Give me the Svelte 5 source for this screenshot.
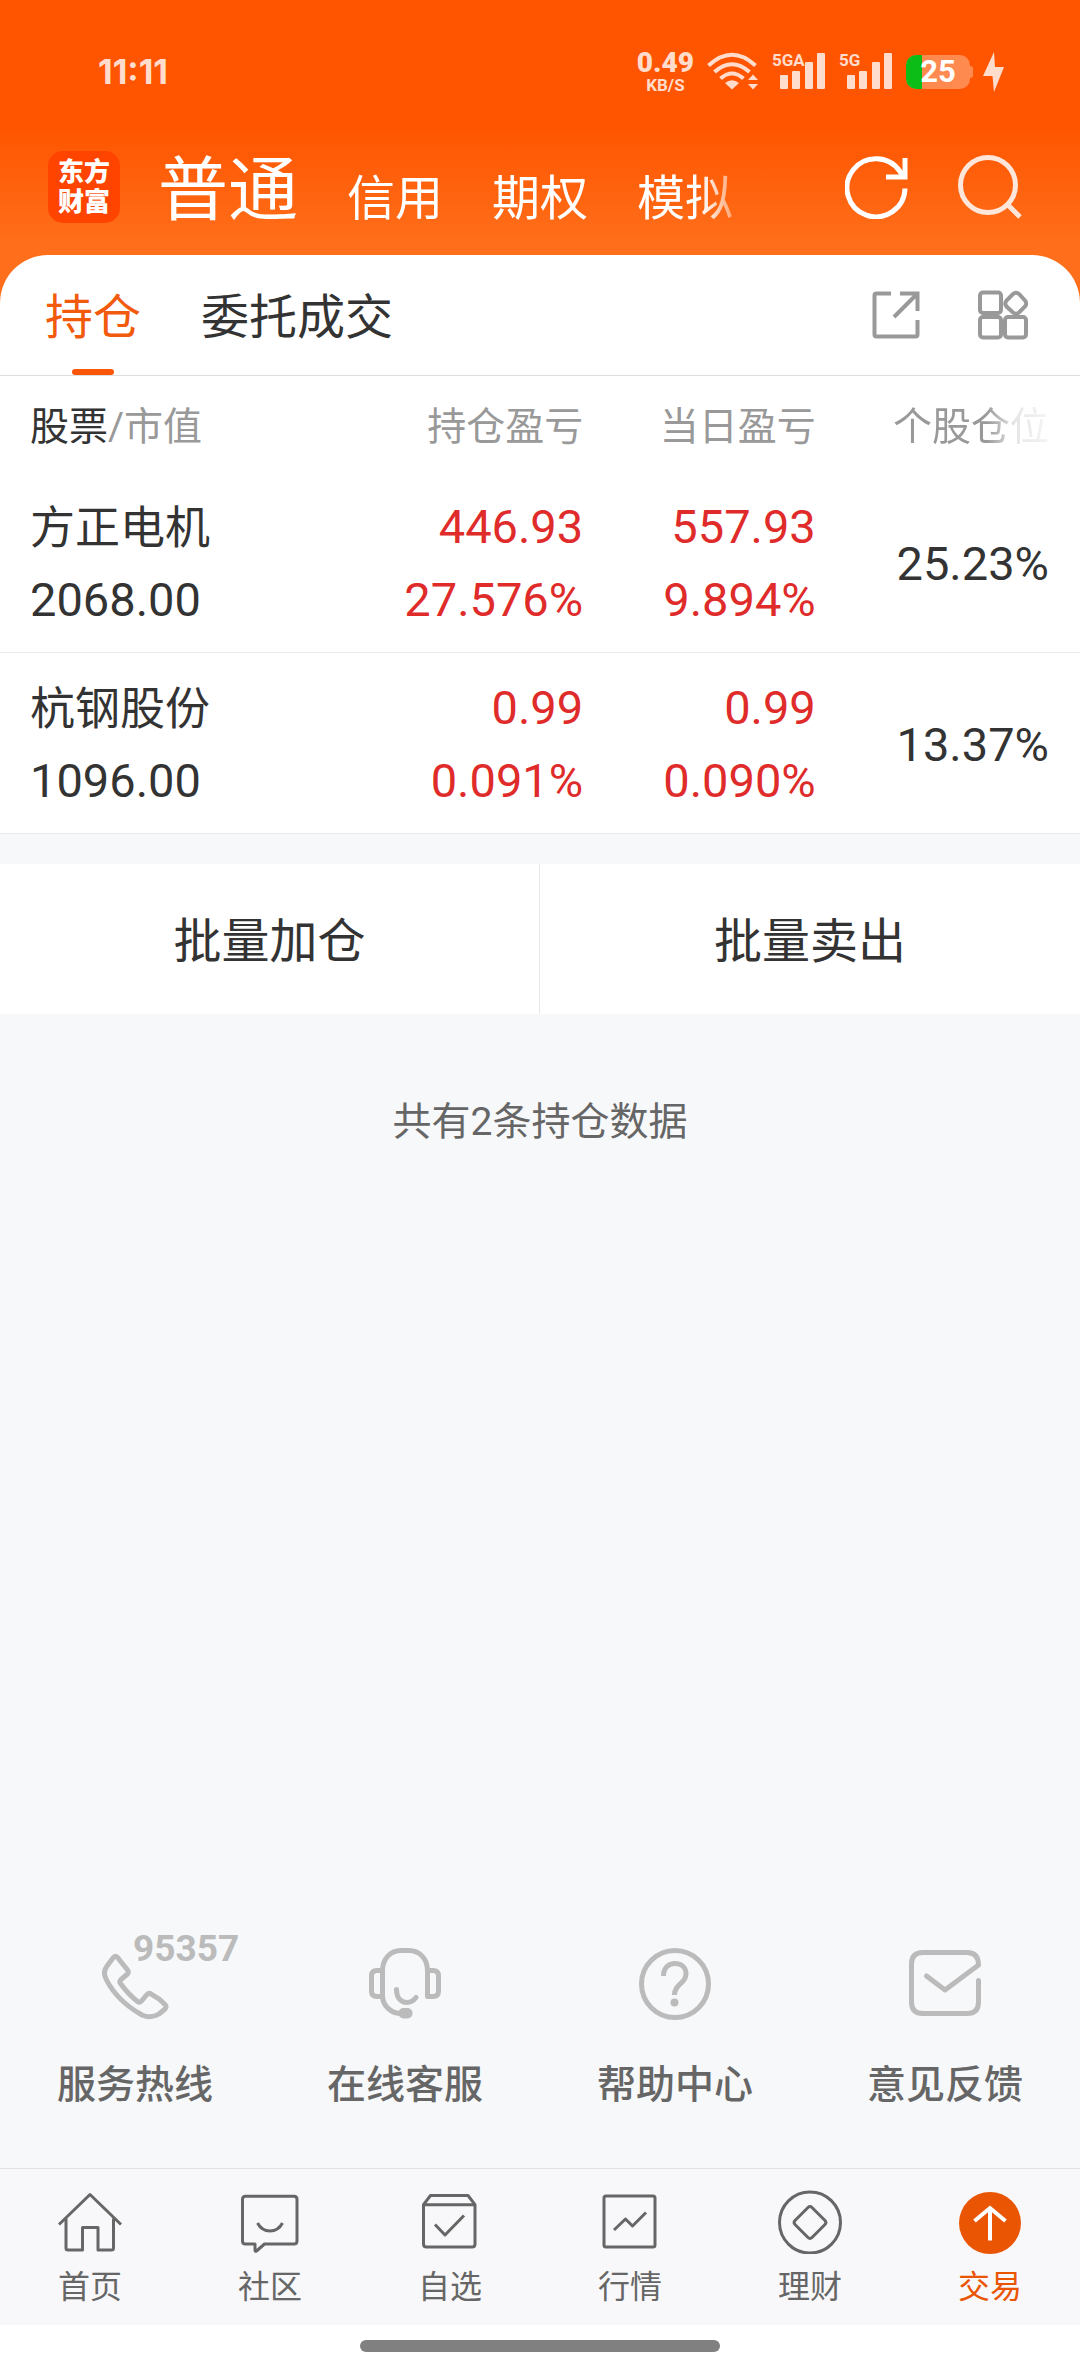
<script>
  const accounts = ['普通', '信用', '期权', '模拟'];
  let account = $state('普通');

  const views = ['持仓', '委托成交'];
  let view = $state('持仓');

  const holdings = [
    { name: '方正电机', value: '2068.00', profit: '446.93', profitRate: '27.576%', day: '557.93', dayRate: '9.894%', share: '25.23%' },
    { name: '杭钢股份', value: '1096.00', profit: '0.99', profitRate: '0.091%', day: '0.99', dayRate: '0.090%', share: '13.37%' }
  ];

  const services = [
    { id: 'phone', label: '服务热线', badge: '95357' },
    { id: 'headset', label: '在线客服' },
    { id: 'help', label: '帮助中心' },
    { id: 'mail', label: '意见反馈' }
  ];

  const navItems = [
    { id: 'home', label: '首页' },
    { id: 'community', label: '社区' },
    { id: 'watchlist', label: '自选' },
    { id: 'market', label: '行情' },
    { id: 'wealth', label: '理财' },
    { id: 'trade', label: '交易' }
  ];
  const currentNav = 'trade';
  const battery = 25;
</script>

{#snippet signal(label)}
  <svg class="signal" width="54" height="46" viewBox="0 -3 54 46" aria-hidden="true">
    <text x="0" y="14">{label}</text>
    <rect x="8" y="23" width="8" height="14" rx="1" />
    <rect x="20" y="19" width="8" height="18" rx="1" />
    <rect x="33" y="10" width="8" height="27" rx="1" />
    <rect x="45" y="1" width="8" height="36" rx="1" />
  </svg>
{/snippet}

{#snippet serviceIcon(id)}
  <svg width="72" height="72" viewBox="0 0 72 72" aria-hidden="true">
    {#if id === 'phone'}
      <path d="M14 10Q16.500 6.500 19 10L28.500 22Q30 24 28.500 26L22 31.500Q20 33.500 21.500 35.500Q29 46 38.500 53.500Q40.500 55 42.500 53L47.500 47Q49.500 44.500 52 46Q60 50 66 56.500Q68 58.500 66 61L60 66Q52 71 43 67Q18 53 7 31Q3.500 24 8 18Z" />
    {:else if id === 'headset'}
      <path d="M13.500 47V23C13.500 10 22 2.500 32 2.500H40C50 2.500 58.500 10 58.500 23V48.500H64Q69.500 48.500 69.500 43V28Q69.500 22.500 64 22.500H58.500" />
      <path d="M13.500 22.500H8Q2.500 22.500 2.500 28V43Q2.500 48.500 8 48.500H13.500C14 58 22 65 31 65.500" />
      <path d="M27.500 41.500C27.500 50 32 54.500 38 54.500Q43 54.500 47 49.500" />
      <rect class="solid" x="29.500" y="60" width="14" height="10.500" rx="5" />
    {:else if id === 'help'}
      <circle cx="36" cy="36" r="33.500" />
      <path class="butt" d="M24.500 28C24.500 19.500 30 15.500 36 15.500C43 15.500 47 20 47 26C47 36 35.500 35.500 35.500 47" />
      <circle class="solid" cx="35.500" cy="54.500" r="4" />
    {:else}
      <path d="M69.500 32.500V54Q69.500 65.500 58 65.500H14Q2.500 65.500 2.500 54V16Q2.500 4.500 14 4.500H58Q69.500 4.500 69.500 17L36 42L17.500 28" />
    {/if}
  </svg>
{/snippet}

{#snippet navIcon(id)}
  <svg width="64" height="64" viewBox="0 0 64 64" aria-hidden="true">
    {#if id === 'home'}
      <path d="M1 34.500L32 4.500L63 34.500" />
      <path d="M8 28.500V58Q8 60 10 60H24.500V37.500H40V60H53.500Q55.500 60 55.500 58V28.500" />
    {:else if id === 'community'}
      <path d="M7.500 6.300H56Q59 6.300 59 9.300V51Q59 54 56 54H26.500L18.500 61Q17 62 17 60V54H7.500Q4.500 54 4.500 51V9.300Q4.500 6.300 7.500 6.300Z" />
      <path d="M19.500 33C25 43.500 39 43.500 44.500 33" />
    {:else if id === 'watchlist'}
      <path d="M5.500 14.700L12.500 5.500H50L57 14.700V54Q57 57 54 57H8.500Q5.500 57 5.500 54ZM5.500 14.700H57" />
      <path d="M17 34.500L27 45L46 25.500" />
    {:else if id === 'market'}
      <rect x="6" y="6" width="51" height="51" rx="2" />
      <path d="M16 40L27.500 29L34.500 36L48 22.500" />
    {:else if id === 'wealth'}
      <circle cx="32" cy="32.500" r="30.500" />
      <path d="M30 17.500Q32 15.500 34 17.500L47 30.500Q49 32.500 47 34.500L34 47.500Q32 49.500 30 47.500L17 34.500Q15 32.500 17 30.500Z" />
    {:else}
      <circle class="disc" cx="32" cy="33" r="31" />
      <path class="arrow" d="M32 50.500V18M16.500 31L32 18L47.500 31" />
    {/if}
  </svg>
{/snippet}

<div class="page">
  <header class="top">
    <div class="status">
      <time>11:11</time>
      <div class="indicators">
        <div class="speed"><b>0.49</b><small>KB/S</small></div>
        <svg class="wifi" width="52" height="40" viewBox="0 0 52 40" aria-hidden="true">
          <path d="M1.500 13.500Q25 -8 48.500 13.500M7.500 20Q25 4.500 42.500 20M13.500 26.500Q25 16.500 36.500 26.500" />
          <path class="solid" d="M18 31Q25 25.500 32 31L25 37.500Z" />
          <path class="solid" d="M41 28L46 22.500L51 28ZM41 32L46 37.500L51 32Z" />
        </svg>
        {@render signal('5GA')}
        {@render signal('5G')}
        <div class="battery">
          <div class="charge" style:width="{battery}%"></div>
          <span>{battery}</span>
        </div>
        <svg class="bolt" width="22" height="40" viewBox="0 0 22 40" aria-hidden="true">
          <path d="M11 0L0 24H9.500L11 40L21 15H12Z" />
        </svg>
      </div>
    </div>
    <div class="masthead">
      <div class="logo"><span>东方</span><span>财富</span></div>
      <nav class="accounts" aria-label="账户">
        {#each accounts as item}
          <button class:current={account === item} onclick={() => (account = item)}>{item}</button>
        {/each}
      </nav>
      <div class="actions">
        <button aria-label="刷新">
          <svg width="64" height="64" viewBox="0 0 64 64" aria-hidden="true">
            <path d="M60 33.500A29 29 0 1 1 55 16.500L59 22" />
            <path d="M41 22H60V3" />
          </svg>
        </button>
        <button aria-label="搜索" class="search">
          <svg width="64" height="64" viewBox="0 0 64 64" aria-hidden="true">
            <circle cx="30" cy="30" r="27.500" />
            <path d="M49 49L62 62" />
          </svg>
        </button>
      </div>
    </div>
  </header>

  <main>
    <section class="card">
      <div class="tabs">
        <div class="tablist" role="tablist">
          {#each views as item}
            <button role="tab" aria-selected={view === item} onclick={() => (view = item)}>{item}</button>
          {/each}
        </div>
        <div class="tools">
          <button aria-label="分享">
            <svg width="48" height="48" viewBox="0 0 48 48" aria-hidden="true">
              <path d="M19 2.500H4.500Q2.500 2.500 2.500 4.500V43.500Q2.500 45.500 4.500 45.500H43.500Q45.500 45.500 45.500 43.500V29M28 2.500H45.500V20M45 3L22 26" />
            </svg>
          </button>
          <button aria-label="更多功能">
            <svg width="50" height="50" viewBox="0 0 50 50" aria-hidden="true">
              <rect x="2" y="2.500" width="21" height="20.500" rx="3" />
              <rect x="2" y="27" width="21" height="20.500" rx="3" />
              <rect x="27" y="27" width="21" height="20.500" rx="3" />
              <path d="M35 4Q38 1.500 41 4L47 10.500Q49.500 13.500 47 16.500L41 22.500Q38 25 35 22.500L28.500 16.500Q26 13.500 28.500 10.500Z" />
            </svg>
          </button>
        </div>
      </div>

      <table>
        <colgroup><col class="c-name" /><col class="c-profit" /><col class="c-day" /><col /></colgroup>
        <thead>
          <tr>
            <th scope="col"><strong>股票</strong>/市值</th>
            <th scope="col">持仓盈亏</th>
            <th scope="col">当日盈亏</th>
            <th scope="col"><span class="faded">个股仓位</span></th>
          </tr>
        </thead>
        <tbody>
          {#each holdings as h}
            <tr>
              <td><div class="name">{h.name}</div><div>{h.value}</div></td>
              <td class="up"><div>{h.profit}</div><div>{h.profitRate}</div></td>
              <td class="up"><div>{h.day}</div><div>{h.dayRate}</div></td>
              <td>{h.share}</td>
            </tr>
          {/each}
        </tbody>
      </table>
    </section>

    <div class="batch">
      <button>批量加仓</button>
      <button>批量卖出</button>
    </div>

    <p class="summary">共有{holdings.length}条持仓数据</p>
  </main>

  <section class="services" aria-label="服务">
    {#each services as s}
      <a href="#{s.id}">
        <span class="icon">
          {@render serviceIcon(s.id)}
          {#if s.badge}<b>{s.badge}</b>{/if}
        </span>
        {s.label}
      </a>
    {/each}
  </section>

  <nav class="bottom" aria-label="主导航">
    {#each navItems as n}
      <a href="#{n.id}" class:active={n.id === currentNav} aria-current={n.id === currentNav ? 'page' : undefined}>
        {@render navIcon(n.id)}
        <span>{n.label}</span>
      </a>
    {/each}
  </nav>
  <div class="gesture"><div></div></div>
</div>

<style>
  :global(body) {
    margin: 0;
    background: #fff;
  }

  .page {
    display: flex;
    flex-direction: column;
    min-height: 100vh;
    background: #f7f8fa;
    color: #333;
    font-family: Roboto, 'Noto Sans CJK SC', sans-serif;
  }

  button {
    padding: 0;
    border: 0;
    background: none;
    color: inherit;
    font: inherit;
    white-space: nowrap;
    cursor: pointer;
  }

  a {
    color: inherit;
    text-decoration: none;
  }

  svg {
    display: block;
    fill: none;
  }

  /* Header */
  .top {
    padding-bottom: 61px;
    background: linear-gradient(#ff5500 42%, #ff6e1a 80%);
    color: #fff;
  }

  .status {
    display: flex;
    align-items: center;
    justify-content: space-between;
    height: 48px;
    padding: 48px 75px 0 98px;
    color: #ffdccb;
  }

  .status time {
    font: 700 34px/48px Inter, sans-serif;
  }

  .indicators {
    display: flex;
    align-items: center;
    gap: 13px;
  }

  .speed {
    display: flex;
    flex-direction: column;
    align-items: center;
    font-weight: 700;
  }

  .speed b {
    font-size: 28px;
    line-height: 26px;
  }

  .speed small {
    font-size: 17px;
    line-height: 18px;
  }

  .wifi {
    stroke: #ffdccb;
    stroke-width: 4px;
  }

  .wifi .solid {
    fill: #ffdccb;
    stroke: none;
  }

  .signal {
    overflow: visible;
    fill: #ffdccb;
    font-size: 17px;
    font-weight: 700;
  }

  .battery {
    position: relative;
    width: 64px;
    border-radius: 10px;
    background: #ff8a50;
    color: #fff;
    font-size: 31px;
    font-weight: 700;
    line-height: 34px;
    text-align: center;
  }

  .battery::after {
    content: '';
    position: absolute;
    top: 11px;
    left: 100%;
    width: 3px;
    height: 12px;
    border-radius: 0 3px 3px 0;
    background: #ff8a50;
  }

  .charge {
    position: absolute;
    inset: 0 auto 0 0;
    border-radius: 10px 0 0 10px;
    background: #0cbd17;
  }

  .battery span {
    position: relative;
  }

  .bolt {
    fill: #ffdccb;
  }

  .masthead {
    display: flex;
    align-items: center;
    height: 110px;
    padding: 36px 58px 0 48px;
  }

  .logo {
    display: flex;
    flex-direction: column;
    justify-content: center;
    width: 72px;
    height: 72px;
    border-radius: 15px;
    background: #ff4400;
    font-size: 26px;
    font-weight: 900;
    line-height: 30px;
    text-align: center;
  }

  .accounts {
    display: flex;
    flex: 1;
    align-items: baseline;
    gap: 49px;
    min-width: 0;
    margin: 0 90px 0 38px;
    padding-top: 8px;
    overflow: hidden;
    font-size: 48px;
    mask-image: linear-gradient(to right, #000 calc(100% - 54px), transparent);
  }

  .accounts .current {
    font-size: 70px;
    line-height: 102px;
  }

  .actions {
    display: flex;
    gap: 49px;
    stroke: #fff;
    stroke-width: 5px;
  }

  .search {
    stroke: #ffe6da;
  }

  /* Holdings card */
  .card {
    margin-top: -48px;
    border-radius: 48px 48px 0 0;
    background: #fff;
  }

  .tabs {
    display: flex;
    justify-content: space-between;
    padding: 0 52px 0 45px;
    border-bottom: 1px solid #dedede;
  }

  .tablist {
    display: flex;
    gap: 60px;
  }

  .tablist button {
    position: relative;
    padding-top: 6px;
    font-size: 48px;
    line-height: 114px;
  }

  .tablist button[aria-selected='true'] {
    color: #f25a0c;
  }

  .tablist button[aria-selected='true']::after {
    content: '';
    position: absolute;
    bottom: 0;
    left: 50%;
    width: 42px;
    height: 6px;
    margin-left: -21px;
    border-radius: 3px;
    background: #f9560a;
  }

  .tools {
    display: flex;
    align-items: center;
    gap: 58px;
    stroke: #999;
    stroke-width: 4px;
  }

  table {
    width: 100%;
    border-collapse: collapse;
    table-layout: fixed;
  }

  .c-name {
    width: 34%;
  }

  .c-profit {
    width: 20%;
  }

  .c-day {
    width: 22%;
  }

  th,
  td {
    padding: 0;
    text-align: right;
    white-space: nowrap;
  }

  th:first-child,
  td:first-child {
    padding-left: 30px;
    text-align: left;
  }

  th:nth-child(3),
  td:nth-child(3) {
    padding-right: 5px;
  }

  th:last-child,
  td:last-child {
    padding-right: 31px;
  }

  th {
    padding-top: 6px;
    color: #999;
    font-size: 39px;
    font-weight: 400;
    line-height: 90px;
  }

  th strong {
    color: #333;
    font-weight: 400;
  }

  .faded {
    mask-image: linear-gradient(to right, #000 60%, rgba(0, 0, 0, 0.25) 78%, rgba(0, 0, 0, 0.1));
  }

  td {
    padding-top: 18px;
    padding-bottom: 16px;
    border-bottom: 1px solid #ebebeb;
    font-size: 47px;
    line-height: 73px;
  }

  td .name {
    padding-top: 4px;
    font-size: 45px;
    line-height: 69px;
  }

  .up {
    color: #e02b2b;
  }

  .batch {
    display: grid;
    grid-template-columns: 1fr 1fr;
    margin-top: 30px;
    background: #fff;
  }

  .batch button {
    padding-top: 6px;
    font-size: 48px;
    line-height: 144px;
  }

  .batch button:first-child {
    border-right: 1px solid #e8e8e8;
  }

  .summary {
    margin: 82px 0 48px;
    color: #666;
    font-size: 39px;
    line-height: 52px;
    text-align: center;
  }

  /* Service shortcuts */
  .services {
    display: grid;
    grid-template-columns: repeat(4, 1fr);
    margin-top: auto;
    padding-bottom: 59px;
    color: #666;
    font-size: 39px;
    font-weight: 500;
    line-height: 48px;
  }

  .services a {
    display: flex;
    flex-direction: column;
    align-items: center;
    gap: 41px;
  }

  .icon {
    position: relative;
    stroke: #bbb;
    stroke-width: 5px;
    stroke-linecap: round;
    stroke-linejoin: round;
  }

  .icon b {
    position: absolute;
    top: -18px;
    left: 34px;
    color: #bbb;
    font-size: 37px;
    font-weight: 700;
    line-height: 38px;
  }

  .icon .butt {
    stroke-linecap: butt;
  }

  .icon .solid {
    fill: #bbb;
    stroke: none;
  }

  /* Bottom navigation */
  .bottom {
    display: grid;
    grid-template-columns: repeat(6, 1fr);
    padding: 21px 0 19px;
    border-top: 1px solid #e2e3e5;
    background: #f8f8fa;
    color: #666;
    font-size: 32px;
    line-height: 38px;
  }

  .bottom a {
    display: flex;
    flex-direction: column;
    align-items: center;
    gap: 14px;
    stroke: #666;
    stroke-width: 3px;
    stroke-linejoin: round;
  }

  .bottom .active {
    color: #ea5504;
  }

  .disc {
    fill: #ea5504;
    stroke: none;
  }

  .arrow {
    stroke: #fff;
    stroke-width: 4px;
    stroke-linejoin: miter;
  }

  .gesture {
    padding: 15px 0 21px;
    background: #fff;
  }

  .gesture div {
    width: 33.333%;
    height: 12px;
    margin: 0 auto;
    border-radius: 6px;
    background: #808080;
  }
</style>
